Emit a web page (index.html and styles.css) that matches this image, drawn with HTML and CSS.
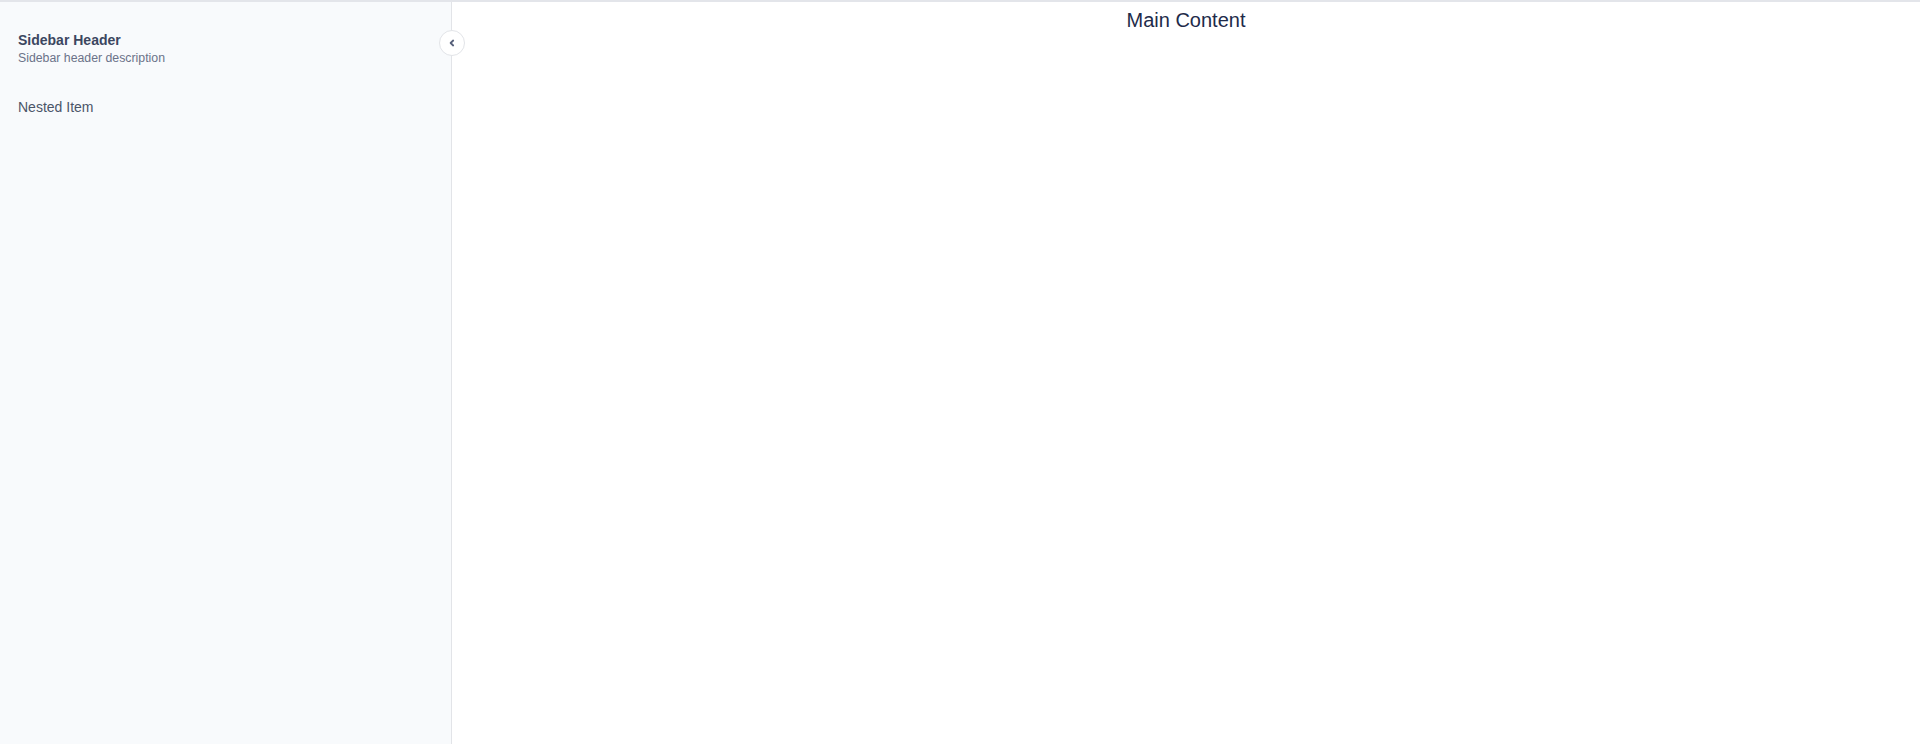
FILE: index.html
```html
<!DOCTYPE html>
<html>
<head>
<meta charset="utf-8">
<link rel="stylesheet" href="styles.css">
</head>
<body>
<div class="app">
  <aside class="sidebar">
    <div class="sidebar-header">
      <div class="title">Sidebar Header</div>
      <div class="desc">Sidebar header description</div>
    </div>
    <nav class="nav">
      <div class="nav-item">Nested Item</div>
    </nav>
    <button class="toggle" aria-label="Collapse">
      <svg width="10" height="10" viewBox="0 0 10 10"><path d="M6.2 2.5 L3.6 5 L6.2 7.5" fill="none" stroke="#56607a" stroke-width="1.8" stroke-linecap="round" stroke-linejoin="round"/></svg>
    </button>
  </aside>
  <main class="main">
    <h1 class="main-title">Main Content</h1>
  </main>
</div>
</body>
</html>
```
FILE: styles.css
```css
* { box-sizing: border-box; }
html, body { margin: 0; padding: 0; height: 100%; }
body {
  font-family: "Liberation Sans", Arial, sans-serif;
  background: #fff;
  border-top: 2px solid #e3e5ea;
}
.app {
  display: flex;
  height: 742px;
}
.sidebar {
  position: relative;
  width: 452px;
  flex: 0 0 452px;
  background: #f8fafc;
  border-right: 1px solid #e2e4e8;
}
.sidebar-header {
  padding: 28px 18px 0;
}
.title {
  font-size: 14px;
  line-height: 20px;
  font-weight: 700;
  color: #3b4660;
}
.desc {
  font-size: 12.3px;
  line-height: 16px;
  color: #6b7389;
}
.nav {
  padding: 31px 18px 0;
}
.nav-item {
  font-size: 14px;
  line-height: 20px;
  color: #4b5568;
}
.toggle {
  position: absolute;
  top: 28px;
  right: -14px;
  width: 26px;
  height: 26px;
  border-radius: 50%;
  border: 1px solid #e2e4e8;
  background: #fff;
  padding: 0;
  display: flex;
  align-items: center;
  justify-content: center;
  cursor: pointer;
  z-index: 2;
}
.main {
  flex: 1;
  text-align: center;
}
.main-title {
  margin: 0;
  padding-top: 4px;
  font-size: 20px;
  line-height: 28px;
  font-weight: 400;
  color: #1e2b4a;
}
```
